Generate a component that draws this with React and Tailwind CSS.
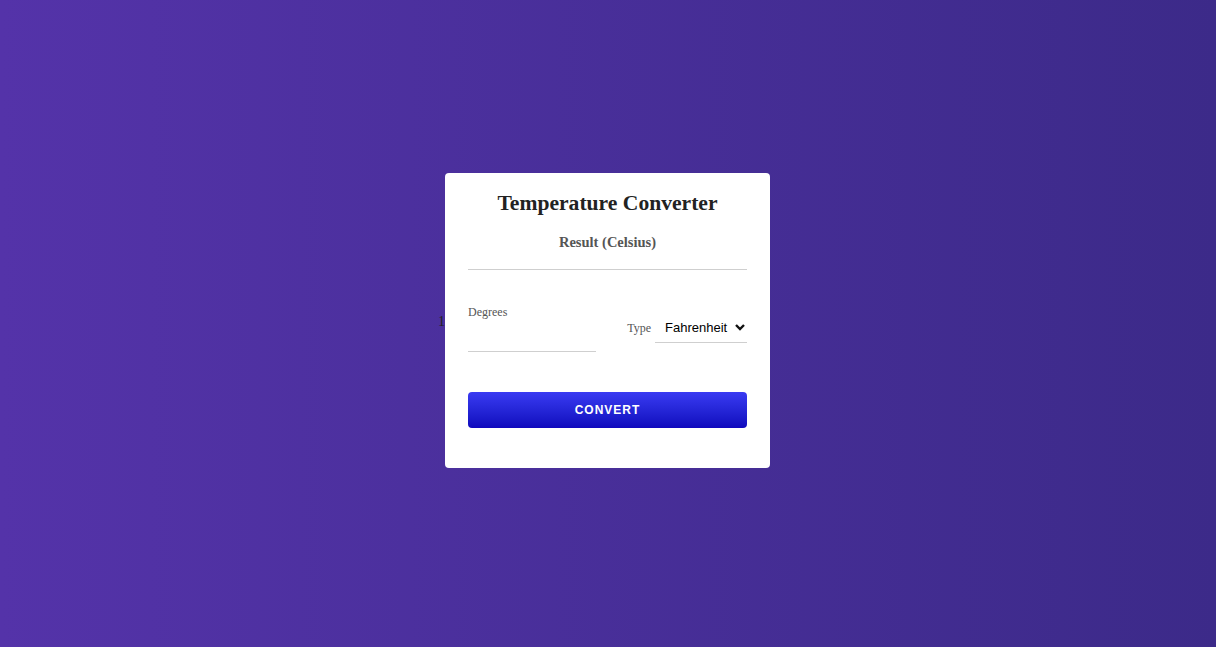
import { useState } from 'react';

export default function App() {
  const [degrees, setDegrees] = useState('');
  const [type, setType] = useState('Fahrenheit');

  return (
    <div className="w-full h-[647px] bg-gradient-to-r from-[#5433a9] to-[#3c2a89] flex items-center justify-center font-['Liberation_Serif',serif]">
      <div className="relative w-[325px] h-[295px] mb-[6px] mr-[1px] bg-white rounded-[4px] px-[23px] pt-[17px]">
        <span className="absolute left-[-7px] top-[138px] text-[14px] text-[#222]">1</span>
        <h1 className="text-[21.6px] font-bold text-[#222] text-center leading-[26px]">Temperature Converter</h1>
        <h2 className="mt-[17px] text-[14.5px] font-bold text-[#555] text-center leading-[18px]">Result (Celsius)</h2>
        <div className="mt-[18px] border-t border-[#cfcfcf]"></div>
        <div className="mt-[35px] flex items-start justify-between">
          <div className="w-[128px]">
            <label className="block text-[12px] text-[#555] leading-[14px]">Degrees</label>
            <input
              value={degrees}
              onChange={e => setDegrees(e.target.value)}
              className="mt-[7px] w-full h-[26px] border-b border-[#cfcfcf] outline-none bg-transparent text-[13px]"
            />
          </div>
          <div className="mt-[8px] flex items-center gap-[4px]">
            <span className="text-[12px] text-[#555]">Type</span>
            <div className="relative w-[92px] border-b border-[#cfcfcf]">
              <select
                value={type}
                onChange={e => setType(e.target.value)}
                className="appearance-none w-full h-[29px] pl-[10px] bg-transparent text-[13px] text-black font-['Liberation_Sans',sans-serif] outline-none"
              >
                <option>Fahrenheit</option>
                <option>Kelvin</option>
              </select>
              <svg className="absolute right-[2px] top-[10px] pointer-events-none" width="10" height="8" viewBox="0 0 10 8">
                <path d="M1 2 L5 6 L9 2" stroke="#111" strokeWidth="2.4" fill="none" />
              </svg>
            </div>
          </div>
        </div>
        <button className="mt-[40px] w-full h-[36px] rounded-[4px] bg-gradient-to-b from-[#3a3af2] to-[#1008bd] text-white text-[12px] font-bold tracking-[1px] font-['Liberation_Sans',sans-serif]">
          CONVERT
        </button>
      </div>
    </div>
  );
}
